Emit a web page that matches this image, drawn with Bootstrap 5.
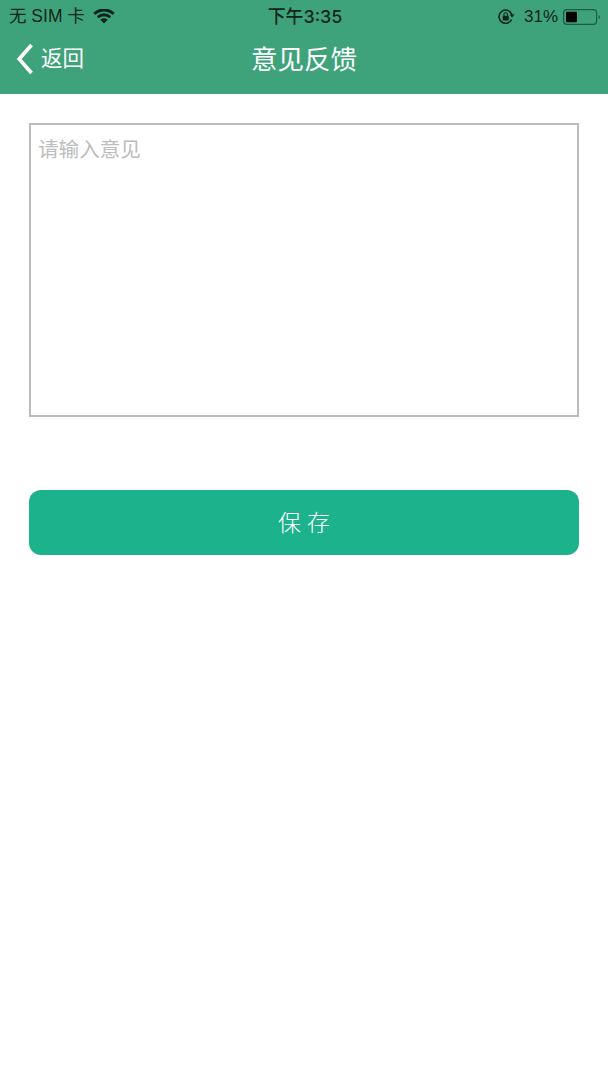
<!DOCTYPE html>
<html lang="zh">
<head>
<meta charset="utf-8">
<title>意见反馈</title>
<link href="https://cdn.jsdelivr.net/npm/bootstrap@5.3.0/dist/css/bootstrap.min.css" rel="stylesheet">
<style>
html,body{height:100%}
body{background:#fff;font-family:"Liberation Sans","Noto Sans CJK SC",sans-serif;width:608px;overflow:hidden}
.app-head{background:#3ea37b;height:94px;color:#fff}
.status-row{height:32px;padding:1px 7px 0 9px;color:#10251c;font-size:17.500px;line-height:31px}
.status-cell{flex:1 1 0;min-width:0}
.status-end{font-size:17px;gap:5px}
.clock{font-family:Inter,"Noto Sans CJK SC",sans-serif;font-weight:500;font-size:17.900px}
.title-row{height:62px;padding-bottom:6px}
.back-cell{left:16px;top:11px;font-size:21.500px;line-height:30px;gap:7px}
.page-title{font-size:26.500px;line-height:36px;font-weight:400}
.page-main{padding:29px 29px 0 29px}
.opinion-box{height:294px;border:2px solid #bcbcbc;border-radius:0;padding:10px 7px;font-size:20.600px;line-height:30px;resize:none;font-family:inherit;color:#333}
.opinion-box::placeholder{color:#bdbdbd;opacity:1}
.save-btn{margin-top:73px;height:65px;background:#1cb28c;border:0;border-radius:12px;color:#fff;font-size:23px;letter-spacing:6px;font-weight:300;padding:2px 0 0 6px}
.save-btn:hover,.save-btn:active{background:#1cb28c!important;color:#fff!important}
</style>
</head>
<body>
<header class="app-head">
  <div class="status-row d-flex align-items-center">
    <div class="status-cell d-flex align-items-center gap-2">
      <span>无 SIM 卡</span>
      <svg width="22" height="15" viewBox="0 0 22 15" aria-hidden="true"><path d="M11 14.500 7.400 10.700a5.200 5.200 0 0 1 7.200 0Z" fill="#10251c"/><path d="M4.800 8.300a8.800 8.800 0 0 1 12.400 0" fill="none" stroke="#10251c" stroke-width="2.800"/><path d="M1.300 4.900a13.800 13.800 0 0 1 19.400 0" fill="none" stroke="#10251c" stroke-width="3"/></svg>
    </div>
    <div class="clock">下午3:35</div>
    <div class="status-cell status-end d-flex align-items-center justify-content-end">
      <svg class="me-1" width="18" height="18" viewBox="0 0 18 18" aria-hidden="true"><path d="M14.600 11.500A6.600 6.600 0 1 1 15 7" fill="none" stroke="#10251c" stroke-width="1.600"/><path d="M12.600 6.500h5L15 9.600Z" fill="#10251c"/><rect x="5.700" y="7.800" width="6" height="4.600" rx=".6" fill="#10251c"/><path d="M6.900 8V6.600a1.800 1.800 0 0 1 3.600 0V8" fill="none" stroke="#10251c" stroke-width="1.100"/></svg>
      <span>31%</span>
      <svg width="38" height="16" viewBox="0 0 38 16" aria-hidden="true"><rect x=".6" y=".6" width="33" height="14.800" rx="3.400" fill="none" stroke="#1f5a44" stroke-width="1.200"/><rect x="3" y="2.800" width="11" height="10.400" rx="1" fill="#050505"/><path d="M35.500 6v4c1-.3 1.400-1 1.400-2s-.4-1.700-1.400-2Z" fill="#1f5a44"/></svg>
    </div>
  </div>
  <div class="title-row position-relative d-flex align-items-center justify-content-center">
    <div class="back-cell position-absolute d-flex align-items-center">
      <svg width="18" height="32" viewBox="0 0 18 32" aria-hidden="true"><path d="M15.500 2 3.200 16l12.300 14" fill="none" stroke="#fff" stroke-width="3.700"/></svg>
      <span>返回</span>
    </div>
    <div class="page-title">意见反馈</div>
  </div>
</header>
<main class="page-main d-flex flex-column">
  <textarea class="form-control opinion-box" placeholder="请输入意见"></textarea>
  <button type="button" class="btn save-btn w-100">保存</button>
</main>
<script src="https://cdn.jsdelivr.net/npm/bootstrap@5.3.0/dist/js/bootstrap.bundle.min.js"></script>
</body>
</html>
